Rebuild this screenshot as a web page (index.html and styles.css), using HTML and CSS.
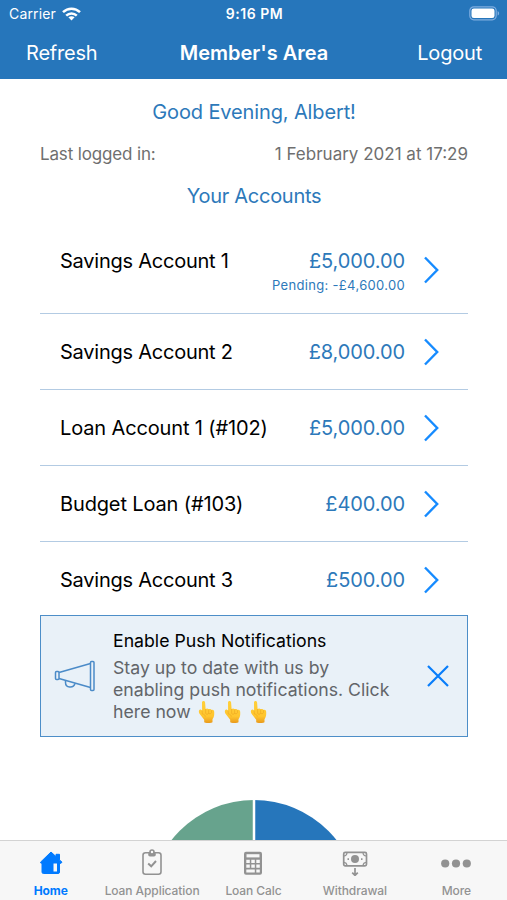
FILE: index.html
```
<!DOCTYPE html>
<html lang="en">
<head>
    <meta charset="UTF-8">
    <title>Member's Area</title>
    <link rel="stylesheet" href="styles.css">
</head>
<body>
    <header class="top">
        <div class="status">
            <div class="carrier">
                <span>Carrier</span>
                <svg class="wifi" width="19" height="14" viewBox="0 0 19 14" fill="none" stroke="#fff" stroke-width="2.5">
                    <path d="M1 5.2C5.8.6 13.2.6 18 5.2"/>
                    <path d="M4.2 8.6c3-2.9 7.600-2.900 10.600 0"/>
                    <path d="M9.500 13.500l-3.100-3.200c1.700-1.500 4.500-1.500 6.200 0z" fill="#fff" stroke="none"/>
                </svg>
            </div>
            <span class="time">9:16 PM</span>
            <svg class="battery" width="31" height="15" viewBox="0 0 31 15">
                <rect x=".8" y=".8" width="26.400" height="13" rx="4" fill="none" stroke="#7fade0" stroke-width="1.200"/>
                <rect x="2.500" y="2.500" width="23" height="9.600" rx="2.300" fill="#fff"/>
                <path d="M28.600 5c2 .8 2 3.800 0 4.600z" fill="#7fade0"/>
            </svg>
        </div>
        <div class="nav">
            <span class="refresh">Refresh</span>
            <h1>Member's Area</h1>
            <span class="logout">Logout</span>
        </div>
    </header>

    <main>
        <h2 class="greeting">Good Evening, Albert!</h2>
        <div class="last">
            <span class="last-lbl">Last logged in:</span>
            <span class="last-date">1 February 2021 at 17:29</span>
        </div>
        <h2 class="accounts">Your Accounts</h2>

        <div class="row first-row">
            <span class="name">Savings Account 1</span>
            <div class="sum">
                <span class="amount">£5,000.00</span>
                <span class="pending">Pending: -£4,600.00</span>
            </div>
            <svg class="arrow" width="16" height="30" viewBox="0 0 16 30"><path d="M2 2.500L14.200 15 2 27.500"/></svg>
        </div>
        <div class="row">
            <span class="name">Savings Account 2</span>
            <div class="sum"><span class="amount">£8,000.00</span></div>
            <svg class="arrow" width="16" height="30" viewBox="0 0 16 30"><path d="M2 2.500L14.200 15 2 27.500"/></svg>
        </div>
        <div class="row">
            <span class="name loan">Loan Account 1 (#102)</span>
            <div class="sum"><span class="amount">£5,000.00</span></div>
            <svg class="arrow" width="16" height="30" viewBox="0 0 16 30"><path d="M2 2.500L14.200 15 2 27.500"/></svg>
        </div>
        <div class="row">
            <span class="name loan">Budget Loan (#103)</span>
            <div class="sum"><span class="amount">£400.00</span></div>
            <svg class="arrow" width="16" height="30" viewBox="0 0 16 30"><path d="M2 2.500L14.200 15 2 27.500"/></svg>
        </div>
        <div class="row last-row">
            <span class="name">Savings Account 3</span>
            <div class="sum"><span class="amount">£500.00</span></div>
            <svg class="arrow" width="16" height="30" viewBox="0 0 16 30"><path d="M2 2.500L14.200 15 2 27.500"/></svg>
        </div>

        <div class="push">
            <svg class="horn" width="42" height="32" viewBox="0 0 42 32">
                <rect x="1.500" y="11.500" width="3.500" height="8" rx="1"/>
                <path d="M5 12.500L36.500 3.500M5 18.500l31.500 9"/>
                <rect x="36.500" y="1.500" width="3.500" height="29" rx="1"/>
                <path d="M11.500 20.500v2c0 5.500 8 6.200 9.500 1"/>
            </svg>
            <div class="push-text">
                <p class="push-title">Enable Push Notifications</p>
                <p class="push-body">Stay up to date with us by<br>enabling push notifications. Click<br>here now <span class="hands"><svg class="hand" viewBox="0 0 18 24"><use href="#hand"/></svg><svg class="hand" viewBox="0 0 18 24"><use href="#hand"/></svg><svg class="hand" viewBox="0 0 18 24"><use href="#hand"/></svg></span></p>
            </div>
            <svg class="close" width="24" height="24" viewBox="0 0 24 24"><path d="M2 2l20 20M22 2L2 22"/></svg>
        </div>

        <svg class="pie" width="210" height="41" viewBox="0 0 210 41">
            <path d="M105 105V0A105 105 0 0 0 0 105z" fill="#67a38d"/>
            <path d="M105 105V0a105 105 0 0 1 105 105z" fill="#2676bb"/>
            <path d="M105 0v41" stroke="#fff" stroke-width="2.500"/>
        </svg>
    </main>

    <nav class="tabs">
        <div class="tab active">
            <svg width="28" height="28" viewBox="0 0 28 28" fill="#007aff">
                <path d="M3.500 14.200L14 4l5 4.600V6.300h3.500v5.600l2.500 2.300-1.200 1.300-1.300-.7v9.200a1.500 1.500 0 0 1-1.500 1.500H6.500A1.500 1.500 0 0 1 5 24v-9.200l-1 .5z" stroke="#007aff" stroke-linejoin="round"/>
                <path d="M16.500 15.500h3.500v8h-3.500z" fill="#f7f7f7"/>
            </svg>
            <span>Home</span>
        </div>
        <div class="tab">
            <svg width="28" height="28" viewBox="0 0 28 28" fill="none" stroke="#929292" stroke-width="1.600">
                <rect x="5" y="4.800" width="18" height="21.500" rx="2.500"/>
                <rect x="11" y="4.800" width="6" height="3" rx="1" fill="#929292"/>
                <circle cx="14" cy="4" r="2" fill="#f7f7f7"/>
                <path d="M10.200 15.500l3 2.800 4.800-5.300" stroke-width="2"/>
            </svg>
            <span>Loan Application</span>
        </div>
        <div class="tab">
            <svg width="28" height="28" viewBox="0 0 28 28">
                <rect x="5" y="3.800" width="18" height="23" rx="2" fill="#929292"/>
                <g fill="#f7f7f7">
                    <path d="M7.500 6.200h13v3.200h-13z"/>
                    <path d="M7.300 11.800h3.500v3.200H7.300zM12.300 11.800h3.500v3.200h-3.500zM17.300 11.800h3.500v3.200h-3.500zM7.300 16.600h3.500v3.200H7.300zM12.300 16.600h3.500v3.200h-3.500zM17.300 16.600h3.500v3.200h-3.500zM7.300 21.400h8.500v3H7.300zM17.300 21.400h3.500v3h-3.500z"/>
                </g>
            </svg>
            <span>Loan Calc</span>
        </div>
        <div class="tab">
            <svg width="28" height="28" viewBox="0 0 28 28" fill="none" stroke="#929292" stroke-width="1.700">
                <rect x="2.700" y="4.400" width="22.800" height="13.400" rx="1.500"/>
                <path d="M3 8A3.500 3.500 0 0 0 6 5M22 5a3.500 3.500 0 0 0 3 3M3 14.300a3.500 3.500 0 0 1 3 3M22 17.300a3.500 3.500 0 0 1 3-3" stroke-width="1.200"/>
                <circle cx="14" cy="11.100" r="4" fill="#929292" stroke="none"/>
                <path d="M6.500 11.100H8M20 11.100h1.500M14 20v7M11.200 24.600l2.800 2.800 2.800-2.800"/>
            </svg>
            <span>Withdrawal</span>
        </div>
        <div class="tab">
            <svg width="30" height="28" viewBox="0 0 30 28" fill="#929292">
                <circle cx="4.200" cy="15.500" r="4.100"/>
                <circle cx="15" cy="15.500" r="4.100"/>
                <circle cx="25.800" cy="15.500" r="4.100"/>
            </svg>
            <span>More</span>
        </div>
    </nav>

    <svg class="defs" width="0" height="0">
        <defs>
            <linearGradient id="skin" x1="0" y1="0" x2="0" y2="1">
                <stop offset="0" stop-color="#ffd03b"/>
                <stop offset=".7" stop-color="#ffc52e"/>
                <stop offset="1" stop-color="#e99a1c"/>
            </linearGradient>
            <g id="hand">
                <path d="M4 2.500C4 .5 7 .5 7.100 2.500L7.600 9c1-.9 2.500-.6 3 .3 1-.7 2.500-.2 2.900.7 1.500-.5 2.700.5 2.700 2 .2 4.200-.5 5.400-1.700 7.300V22c0 1.300-8.300 1.300-8.300 0v-2.200L1.700 14C.3 11.800.7 9.300 2.800 9.500l1.300 1z" fill="url(#skin)"/>
                <path d="M7.600 9v4.200c.2 1.500 2.700 1.500 3-.1V9.500m0 3.500c.4 1.300 2.500 1 2.900-.5v-2.300M4.100 10.500l.2 3.500c2 .3 3 1.200 3 2.800" fill="none" stroke="#e9a01f" stroke-width=".5"/>
            </g>
        </defs>
    </svg>
</body>
</html>
```
FILE: styles.css
```
* {
    box-sizing: border-box;
}

body {
    margin: 0;
    height: 900px;
    display: flex;
    flex-direction: column;
    overflow: hidden;
    background: #fff;
    font-family: Inter, "Liberation Sans", sans-serif;
    color: #000;
}

h1, h2, p {
    margin: 0;
    font-weight: 400;
}

span {
    white-space: nowrap;
}

.top {
    height: 79px;
    background: #2676bb;
    color: #fff;
}

.status {
    height: 27px;
    display: grid;
    grid-template-columns: 1fr auto 1fr;
    align-items: center;
    padding: 0 7px 0 9px;
    font-size: 14px;
}

.carrier {
    display: flex;
    align-items: center;
    gap: 6px;
    letter-spacing: .15px;
}

.time {
    font-weight: 600;
    letter-spacing: .5px;
}

.battery {
    justify-self: end;
}

.nav {
    height: 50px;
    display: grid;
    grid-template-columns: 1fr auto 1fr;
    align-items: center;
    padding: 1px 25px 0 26px;
    font-size: 20px;
    letter-spacing: -.2px;
}

.nav h1 {
    font-size: 20px;
    font-weight: 600;
    letter-spacing: 0;
}

.logout {
    justify-self: end;
}

main {
    flex: 1;
    min-height: 0;
    padding: 0 39px 0 40px;
}

.greeting, .accounts {
    text-align: center;
    font-size: 20px;
    line-height: 24px;
    color: #2d79ba;
}

.greeting {
    margin-top: 21px;
    letter-spacing: -.13px;
}

.last {
    display: flex;
    justify-content: space-between;
    margin: 19px 0;
    font-size: 17px;
    line-height: 22px;
    color: #6f6f6f;
}

.last-lbl {
    letter-spacing: -.15px;
}

.accounts {
    margin-bottom: 29px;
    letter-spacing: -.28px;
}

.row {
    height: 76px;
    display: flex;
    align-items: center;
    padding: 0 29px 0 20px;
    border-bottom: 1px solid #b3cbe3;
    font-size: 20px;
    line-height: 24px;
}

.name {
    letter-spacing: -.24px;
}

.loan {
    letter-spacing: -.14px;
}

.first-row {
    height: 77px;
    padding-bottom: 10px;
}

.first-row .name {
    margin-bottom: 19px;
}

.first-row .sum {
    margin-top: 4px;
}

.last-row {
    height: 73px;
    border: 0;
    padding-top: 2px;
}

.sum {
    margin-left: auto;
    display: flex;
    flex-direction: column;
    align-items: flex-end;
    color: #2d79ba;
    letter-spacing: -.1px;
}

.pending {
    margin-top: 2px;
    font-size: 13px;
    line-height: 20px;
    letter-spacing: .32px;
}

.arrow {
    margin-left: 18px;
    fill: none;
    stroke: #168bff;
    stroke-width: 2.4;
}

.push {
    height: 122px;
    display: flex;
    border: 1px solid #4d8ec8;
    background: #e9f1f8;
}

.horn {
    margin: 44px 0 0 13px;
    fill: none;
    stroke: #4b8bc8;
    stroke-width: 1.5;
}

.push-text {
    margin: 13px 0 0 17px;
}

.push-title {
    font-size: 17.7px;
    line-height: 24px;
}

.push-body {
    margin-top: 4px;
    font-size: 17.7px;
    line-height: 22px;
    color: #626569;
    white-space: nowrap;
}

.hands {
    display: inline-flex;
    gap: 8px;
    height: 22px;
    margin: -1px 0 0 2px;
    vertical-align: top;
}

.hand {
    width: 18px;
    height: 24px;
}

.close {
    margin: 48px 17px 0 auto;
    fill: none;
    stroke: #087dfa;
    stroke-width: 2.2;
}

.pie {
    display: block;
    margin: 63px auto 0;
}

.tabs {
    height: 60px;
    display: grid;
    grid-template-columns: repeat(5, 1fr);
    background: #f7f7f7;
    border-top: 1px solid #d3d3d3;
}

.tab {
    display: flex;
    flex-direction: column;
    align-items: center;
    padding-top: 7px;
    font-size: 12px;
    line-height: 16px;
    font-weight: 500;
    color: #929292;
    letter-spacing: -.08px;
}

.tab span {
    margin-top: 7px;
}

.active {
    color: #007aff;
    font-weight: 700;
}

.defs {
    position: absolute;
}
```
